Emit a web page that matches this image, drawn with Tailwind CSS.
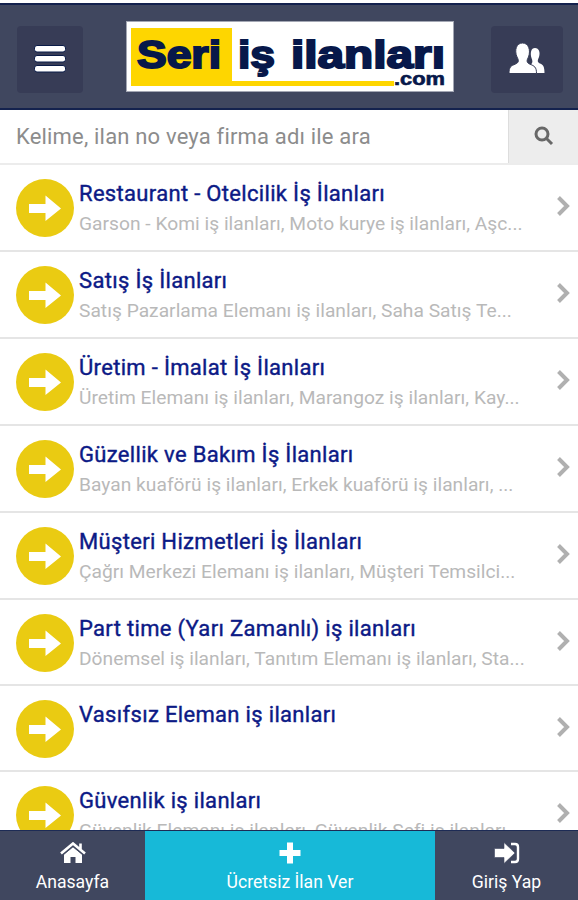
<!DOCTYPE html>
<html lang="tr">
<head>
  <meta charset="UTF-8" />
  <meta name="viewport" content="width=device-width, initial-scale=1.0" />
  <title>Seri iş ilanları</title>
  <script src="https://cdn.jsdelivr.net/npm/@tailwindcss/browser@4"></script>
</head>
<body class="bg-white font-[Roboto,sans-serif]">
  <div class="flex h-[900px] w-[578px] flex-col overflow-hidden pt-[3px]">
    <header class="flex h-[107px] shrink-0 items-center justify-between border-y-2 border-[#14224e] bg-[#40475f] pr-[15px] pl-[17px]">
      <button aria-label="Menü" class="mt-1.5 flex h-[67px] w-[66px] items-center justify-center rounded-sm bg-[#373c56]">
        <svg class="mt-[-1px]" width="34" height="30" viewBox="0 0 34 30" fill="#fff" stroke="#0b1c48" stroke-width="1">
          <rect x="1.5" y="1.5" width="31" height="6.5" rx="2.5" />
          <rect x="1.5" y="11.5" width="31" height="6.5" rx="2.5" />
          <rect x="1.5" y="21.5" width="31" height="6.5" rx="2.5" />
        </svg>
      </button>

      <svg class="ml-[6px] mb-[1px]" width="328" height="71" viewBox="0 0 328 71" font-family="Liberation Sans, sans-serif" font-weight="700" fill="#07184a" stroke="#07184a">
        <rect x=".5" y=".5" width="327" height="70" fill="#fff" stroke="#a3a7b4" />
        <path d="M5 7h101v53h162v5H5z" fill="#fed600" stroke="none" />
        <text x="11" y="47" font-size="39" stroke-width="2" textLength="84" lengthAdjust="spacingAndGlyphs">Seri</text>
        <text x="112" y="47" font-size="39" stroke-width="2" textLength="37" lengthAdjust="spacingAndGlyphs">iş</text>
        <text x="165" y="47" font-size="39" stroke-width="2" textLength="154" lengthAdjust="spacingAndGlyphs">ilanları</text>
        <text x="268" y="64" font-size="18" stroke-width=".6" textLength="51" lengthAdjust="spacingAndGlyphs">.com</text>
      </svg>

      <button aria-label="Üyelik" class="mt-1.5 flex h-[67px] w-[72px] items-center justify-center rounded-sm bg-[#373c56]">
        <svg class="mt-[-4px]" width="38" height="32" viewBox="0 0 38 32" fill="#fff">
          <path d="M28 31c0-6-3-7-5-8.500 2-2 1.500-4 .5-6.500C22 11 23 6 27 6s5.500 4.500 4 9c-1.500 3.500-2 5 1 6.500 3.500 1.500 4.500 3.500 4.500 9.500z" />
          <path d="M1 31.500c0-7 2-7.500 6.500-9.500 3.500-1.500 3.500-3.500 1.500-7C6 8 8.500 1 14.500 1S23 8 20.500 15c-2 3.500-2 5.500 1 7 5 2 7 3 7 9.500z" stroke="#373c56" stroke-width="1" />
        </svg>
      </button>
    </header>

    <div class="flex h-[55px] shrink-0 border-b-2 border-[#ececec]">
      <div class="flex-1 pt-[11px] pl-4 text-[22px] leading-8 tracking-[0.18px] whitespace-nowrap text-[#8c8c8c]">Kelime, ilan no veya firma adı ile ara</div>
      <button aria-label="Ara" class="flex w-[70px] items-center justify-center border-l border-[#ddd] bg-[#ededed]">
        <svg class="mt-[-1px]" width="20" height="20" viewBox="0 0 20 20" fill="none" stroke="#686868" stroke-width="3">
          <circle cx="8" cy="8" r="6" />
          <path d="M12.500 12.500l5.500 5.500" />
        </svg>
      </button>
    </div>

    <main id="list" class="min-h-0 flex-1 overflow-hidden"></main>

    <nav class="flex h-[70px] shrink-0 border-t border-[#1d2b55] bg-[#40475f] text-center text-[17.6px] leading-6 text-white">
      <a class="flex w-[145px] flex-col items-center pt-[11px]">
        <svg width="26" height="22" viewBox="0 0 26 22" fill="#fff">
          <path d="M13 5l9 7.500V21h-6.500v-6h-5v6H4v-8.500z" />
          <path d="M1 11.500L13 1.500l12 10M20.500 1.500v6" fill="none" stroke="#fff" stroke-width="2.600" />
          <path d="M3 13L13 4.800 23 13" fill="none" stroke="#40475f" stroke-width=".8" />
        </svg>
        <span class="mt-[6px]">Anasayfa</span>
      </a>
      <a class="flex w-[290px] flex-col items-center bg-[#17b9d8] pt-[11px]">
        <svg width="22" height="22" viewBox="0 0 22 22" fill="#fff">
          <path d="M8 0.500h6V8h7.500v6H14v7.500H8V14H.5V8H8z" />
        </svg>
        <span class="mt-[6px]">Ücretsiz İlan Ver</span>
      </a>
      <a class="flex flex-1 flex-col items-center pt-[11px]">
        <svg width="26" height="22" viewBox="0 0 26 22" fill="#fff">
          <path d="M17 2h4q3 0 3 3v12q0 3-3 3h-4" fill="none" stroke="#fff" stroke-width="2.400" />
          <path d="M.5 6.500H10V.5L21 11 10 21.500v-6H.5z" stroke="#40475f" stroke-width=".6" />
        </svg>
        <span class="mt-[6px]">Giriş Yap</span>
      </a>
    </nav>
  </div>

  <script>
    const categories = [
      ["Restaurant - Otelcilik İş İlanları", "Garson - Komi iş ilanları, Moto kurye iş ilanları, Aşc...", 87],
      ["Satış İş İlanları", "Satış Pazarlama Elemanı iş ilanları, Saha Satış Te...", 87],
      ["Üretim - İmalat İş İlanları", "Üretim Elemanı iş ilanları, Marangoz iş ilanları, Kay...", 87],
      ["Güzellik ve Bakım İş İlanları", "Bayan kuaförü iş ilanları, Erkek kuaförü iş ilanları, ...", 87],
      ["Müşteri Hizmetleri İş İlanları", "Çağrı Merkezi Elemanı iş ilanları, Müşteri Temsilci...", 87],
      ["Part time (Yarı Zamanlı) iş ilanları", "Dönemsel iş ilanları, Tanıtım Elemanı iş ilanları, Sta...", 86],
      ["Vasıfsız Eleman iş ilanları", "", 86],
      ["Güvenlik iş ilanları", "Güvenlik Elemanı iş ilanları, Güvenlik Şefi iş ilanları", 87],
    ];

    document.getElementById("list").innerHTML = categories.map(([title, desc, height]) => `
      <a class="flex items-start border-b-2 border-[#e5e5e5] pr-[7px] pl-4" style="height:${height}px">
        <svg class="mt-[14px] shrink-0" width="58" height="58" viewBox="0 0 58 58">
          <circle cx="29" cy="29" r="29" fill="#eacb12" />
          <path d="M13 25h16.500V16.500L45 29.500 29.500 42v-8H13z" fill="#fff" />
        </svg>
        <div class="min-w-0 flex-1 pt-[14px] pl-[5px] whitespace-nowrap">
          <div class="text-[22px] leading-[30px] tracking-[0.32px] text-[#0c1a86] [-webkit-text-stroke:0.4px_#0c1a86]">${title}</div>
          <div class="text-[19.2px] leading-[29px] tracking-[0.02px] text-[#b9b9b9]">${desc}</div>
        </div>
        <svg class="mt-[30px] shrink-0" width="15" height="22" viewBox="0 0 15 22" fill="none" stroke="#b0b0b0" stroke-width="4">
          <path d="M2.500 2.500l8.500 8.500-8.500 8.500" />
        </svg>
      </a>
    `).join("");
  </script>
</body>
</html>
